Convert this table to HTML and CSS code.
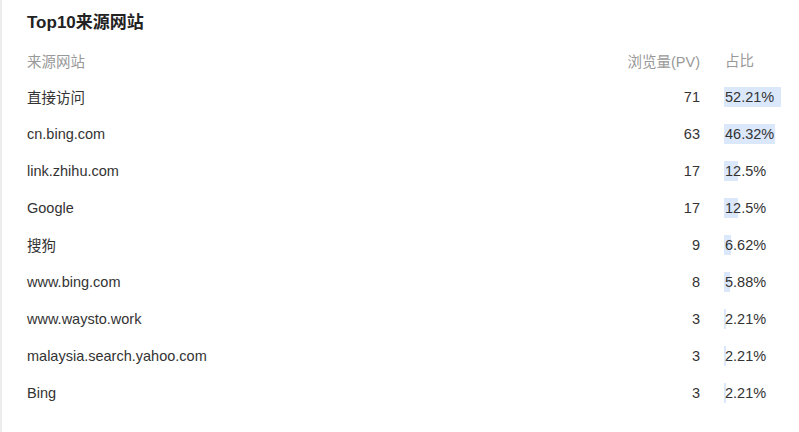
FILE: index.html
```html
<!DOCTYPE html>
<html lang="zh-CN">
<head>
<meta charset="utf-8">
<title>Top10来源网站</title>
<link rel="stylesheet" href="styles.css">
</head>
<body>
<div class="page">
  <div class="card">
    <h2 class="title">Top10来源网站</h2>
    <div class="table">
      <div class="row head">
        <div class="c-name">来源网站</div>
        <div class="c-pv">浏览量(PV)</div>
        <div class="c-pct">占比</div>
      </div>
      <div class="row"><div class="c-name">直接访问</div><div class="c-pv">71</div><div class="c-pct"><span class="bar" style="width:52.21%"></span><span class="val">52.21%</span></div></div>
      <div class="row"><div class="c-name">cn.bing.com</div><div class="c-pv">63</div><div class="c-pct"><span class="bar" style="width:46.32%"></span><span class="val">46.32%</span></div></div>
      <div class="row"><div class="c-name">link.zhihu.com</div><div class="c-pv">17</div><div class="c-pct"><span class="bar" style="width:12.5%"></span><span class="val">12.5%</span></div></div>
      <div class="row"><div class="c-name">Google</div><div class="c-pv">17</div><div class="c-pct"><span class="bar" style="width:12.5%"></span><span class="val">12.5%</span></div></div>
      <div class="row"><div class="c-name">搜狗</div><div class="c-pv">9</div><div class="c-pct"><span class="bar" style="width:6.62%"></span><span class="val">6.62%</span></div></div>
      <div class="row"><div class="c-name">www.bing.com</div><div class="c-pv">8</div><div class="c-pct"><span class="bar" style="width:5.88%"></span><span class="val">5.88%</span></div></div>
      <div class="row"><div class="c-name">www.waysto.work</div><div class="c-pv">3</div><div class="c-pct"><span class="bar" style="width:2.21%"></span><span class="val">2.21%</span></div></div>
      <div class="row"><div class="c-name">malaysia.search.yahoo.com</div><div class="c-pv">3</div><div class="c-pct"><span class="bar" style="width:2.21%"></span><span class="val">2.21%</span></div></div>
      <div class="row"><div class="c-name">Bing</div><div class="c-pv">3</div><div class="c-pct"><span class="bar" style="width:2.21%"></span><span class="val">2.21%</span></div></div>
    </div>
  </div>
</div>
</body>
</html>
```

FILE: styles.css
```css
html, body {
  margin: 0;
  padding: 0;
  background: #ffffff;
  overflow: hidden;
}
body {
  font-family: "Liberation Sans", Arial, "Noto Sans CJK SC", sans-serif;
  color: #333333;
}
.page {
  display: flex;
  width: 799px;
  height: 432px;
  border-left: 2px solid #ececec;
  box-sizing: border-box;
  overflow: hidden;
}
.card {
  background: #ffffff;
  padding: 11px 0 0 25px;
  flex: 1;
  min-width: 0;
  overflow: hidden;
}
.title {
  margin: 0;
  font-size: 17px;
  line-height: 24px;
  font-weight: bold;
  color: #222222;
}
.table {
  margin-top: 8px;
  width: 807px;
}
.row {
  display: grid;
  grid-template-columns: 1fr auto 110px;
  column-gap: 24px;
  align-items: center;
  height: 37px;
  font-size: 14.5px;
}
.row.head {
  height: 35px;
  color: #999999;
}
.c-pv {
  text-align: right;
}
.c-pct {
  position: relative;
  height: 20px;
  line-height: 20px;
}
.bar {
  position: absolute;
  left: 0;
  top: 0;
  bottom: 0;
  background: #dbe8fb;
}
.val {
  position: relative;
  padding-left: 1px;
}
.head .c-pct {
  padding-left: 1px;
}
```
